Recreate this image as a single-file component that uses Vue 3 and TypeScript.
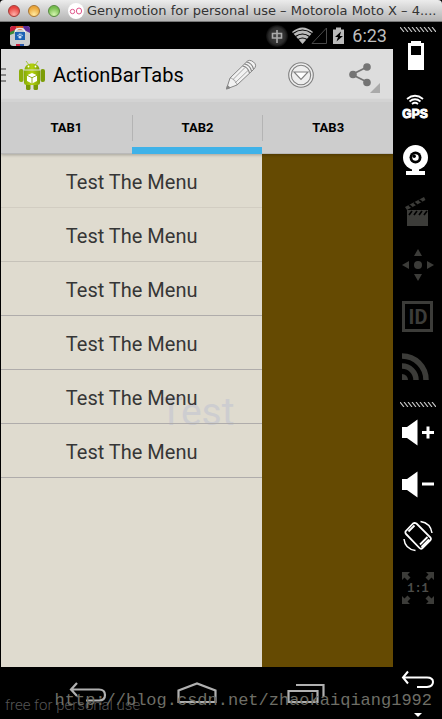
<script setup lang="ts">
import { ref } from 'vue'

const tabs: string[] = ['TAB1', 'TAB2', 'TAB3']
const activeTab = ref<number>(1)
const menuItems: string[] = Array.from({ length: 6 }, () => 'Test The Menu')

// Slanted strokes of the toolbar grips, one every four pixels
const gripPath: string = Array.from({ length: 9 }, (_, i) => `M${i * 4} 0l4 5`).join('')
</script>

<template>
  <div class="window">
    <header class="titlebar">
      <button class="light red" aria-label="Close"></button>
      <button class="light amber" aria-label="Minimize"></button>
      <button class="light green" aria-label="Zoom"></button>
      <svg class="logo" viewBox="0 0 16 16" aria-hidden="true">
        <circle cx="8" cy="8" r="8" fill="#fff" />
        <g fill="none" stroke="#e0568c" stroke-width="1">
          <circle cx="4.500" cy="8.500" r="2.200" />
          <ellipse cx="11" cy="8" rx="2.600" ry="3" />
        </g>
      </svg>
      <h1 class="window-title">Genymotion for personal use – Motorola Moto X – 4....</h1>
    </header>

    <div class="body">
      <main class="device">
        <div class="status">
          <svg class="app-badge" viewBox="0 0 20 20" aria-hidden="true">
            <rect width="20" height="20" rx="3" fill="#c9cccd" />
            <path d="M0 7V3Q0 0 3 0H7L5 5Z" fill="#c8203c" />
            <path d="M6 0H14L13 4H7Z" fill="#d6571f" />
            <path d="M13 0H17Q20 0 20 3V7L14 4Z" fill="#5b2a99" />
            <path d="M0 6L5 4V7L0 9Z" fill="#3a8a3a" />
            <path d="M6 18h4v2H6z" fill="#c8203c" /><path d="M10 18h4v2h-4z" fill="#2553a5" />
            <path d="M5 7Q5 2.500 10 2.500T15 7" fill="none" stroke="#eee" stroke-width="1.500" />
            <rect x="5" y="6" width="10" height="8" fill="#1c62b5" />
            <g fill="#cfe2f5"><circle cx="10" cy="11" r="1.600" /><circle cx="8" cy="9.500" r=".7" /><circle cx="9.300" cy="8.200" r=".7" /><circle cx="10.900" cy="8.200" r=".7" /><circle cx="12.100" cy="9.500" r=".7" /></g>
          </svg>
          <span class="spacer"></span>
          <svg class="status-icons" viewBox="0 0 80 24" aria-hidden="true">
            <defs>
              <radialGradient id="ime"><stop offset="0" stop-color="#484848" /><stop offset=".75" stop-color="#2c2c2c" /><stop offset="1" stop-color="#0a0a0a" /></radialGradient>
            </defs>
            <circle cx="11" cy="12" r="11" fill="url(#ime)" />
            <path d="M6.500 9.500h9v4.500h-9zM11 6v13" fill="none" stroke="#aaa" stroke-width="1.600" />
            <path d="M26 8Q36.500-1 47 8L36.500 20Z" fill="#bbb" />
            <path d="M27 9.500Q36.500 2.500 46 9.500M29.500 12.500Q36.500 7.500 43.500 12.500M32 15.500Q36.500 12.500 41 15.500" fill="none" stroke="#000" stroke-width="1.200" />
            <path d="M46 19.500L60.500 4V19.500Z" fill="none" stroke="#4a4a4a" />
            <path d="M67 5.500h3V3.500h5v2h3V20H67Z" fill="#bbb" />
            <path d="M75 7.500L69 13h3l-1.500 4.500L77 12h-3.200Z" fill="#000" />
          </svg>
          <time class="clock">6:23</time>
        </div>

        <div class="actionbar">
          <button class="drawer-toggle" aria-label="Open menu"><i></i><i></i><i></i></button>
          <svg class="droid" viewBox="0 0 26 30" aria-hidden="true">
            <defs>
              <linearGradient id="dr"><stop offset="0" stop-color="#87ac08" /><stop offset=".5" stop-color="#b4d20c" /><stop offset="1" stop-color="#7ea006" /></linearGradient>
            </defs>
            <path d="M7 1l3 4M19 1l-3 4" stroke="#a4c639" stroke-width="1" />
            <path d="M5.500 9.500C6 1.500 20 1.500 20.500 9.500Z" fill="url(#dr)" />
            <circle cx="9.500" cy="6.500" r=".9" fill="#fff" /><circle cx="16.500" cy="6.500" r=".9" fill="#fff" />
            <rect x="0" y="9" width="4.500" height="13" rx="2" fill="#8cad0b" />
            <rect x="21.500" y="9" width="4.500" height="13" rx="2" fill="#7c9d08" />
            <rect x="7" y="22" width="4.500" height="8" rx="1.500" fill="#789808" />
            <rect x="14.500" y="22" width="4.500" height="8" rx="1.500" fill="#789808" />
            <path d="M5 10.500H21V22.500Q21 25 18 25H8Q5 25 5 22.500Z" fill="url(#dr)" />
            <path d="M13 13l5 2.300v5.700l-5 2.500-5-2.500v-5.700Z" fill="#fff" />
            <path d="M8 15.300l5 2.400 5-2.400M13 17.700v5.800" fill="none" stroke="#8aa80a" stroke-width=".9" />
          </svg>
          <h2 class="app-title">ActionBarTabs</h2>
          <button class="action" aria-label="Edit">
            <svg viewBox="0 0 32 32" fill="#f2f2f2" stroke="#858585" stroke-width="1" stroke-linejoin="round" aria-hidden="true">
              <path d="M1.500 30L5 19L21 3.500Q24-.5 28.500 3T28 11L12 26Z" />
              <path d="M5 19Q7 18.500 8 20.500Q10.500 21 10.500 23.500Q12.500 24 12 26M8 20.500L20 8.500M10.500 23.500L23 11.500" fill="none" stroke-width=".7" />
              <path d="M17.500 7Q23 8 24.500 14M19.500 5Q25 6 26.500 12M21.500 3Q27 4 28.500 10" fill="none" stroke-width="1.200" />
              <path d="M1.500 30l1-3.500 2.500 2.200Z" fill="#858585" />
            </svg>
          </button>
          <button class="action" aria-label="More">
            <svg viewBox="0 0 32 32" fill="#eee" stroke="#808080" aria-hidden="true">
              <circle cx="16" cy="16" r="12.300" stroke-width="1.100" /><circle cx="16" cy="16" r="9.700" stroke-width="1.100" />
              <path d="M9 13h14L16 20.500Z" fill="#fff" stroke-width="1.100" />
            </svg>
          </button>
          <button class="action share" aria-label="Share">
            <svg viewBox="0 0 32 32" fill="#747474" aria-hidden="true">
              <path d="M22 8L7 15.500L22 23" fill="none" stroke="#747474" stroke-width="1.800" />
              <circle cx="22" cy="8" r="3.800" /><circle cx="8" cy="15.500" r="3.800" /><circle cx="22" cy="23.500" r="3.800" />
            </svg>
          </button>
        </div>

        <nav class="tabs" role="tablist">
          <button
            v-for="(tab, i) in tabs"
            :key="tab"
            class="tab"
            :class="{ active: i === activeTab }"
            role="tab"
            :aria-selected="i === activeTab"
            @click="activeTab = i"
          ><span>{{ tab }}</span></button>
        </nav>

        <section class="content">
          <div class="drawer"></div>
          <p class="page-label">Test</p>
          <ul class="menu">
            <li v-for="(item, i) in menuItems" :key="i"><button>{{ item }}</button></li>
          </ul>
        </section>

        <footer class="navbar">
          <button aria-label="Back">
            <svg viewBox="0 0 40 24" fill="none" stroke="#b0b0b0" stroke-width="2.200" aria-hidden="true">
              <path d="M9 2L3 8.500L9 15M3 8.500H31Q37 8.500 37 14T31 19.500H18" />
            </svg>
          </button>
          <button aria-label="Home">
            <svg viewBox="0 0 40 24" fill="none" stroke="#b0b0b0" stroke-width="2.200" aria-hidden="true">
              <path d="M1.500 21V9.500L20 2.500L38.500 9.500V21Z" />
            </svg>
          </button>
          <button aria-label="Recent apps">
            <svg viewBox="0 0 40 24" fill="none" stroke="#b0b0b0" stroke-width="2.200" aria-hidden="true">
              <path d="M2.500 10H31.500V21H2.500ZM10 4H37.500V16" />
            </svg>
          </button>
        </footer>
      </main>

      <aside class="toolbar">
        <div class="grip first"><svg viewBox="0 0 36 5"><path :d="gripPath" stroke="#c4c4c4" stroke-width="1.200" /></svg></div>
        <button aria-label="Battery">
          <svg viewBox="0 0 49 52" fill="#fff"><path fill-rule="evenodd" d="M18 12h10v2h3v27H15V14h3ZM18 17v9h10v-9Z" /></svg>
        </button>
        <button aria-label="GPS">
          <svg viewBox="0 0 49 52" fill="none" stroke="#fff" stroke-width="1.800">
            <path d="M14 18Q22 11.500 30 18M16.500 20.500Q22 16 27.500 20.500M19 23Q22 20.500 25 23" />
            <text x="22" y="37" class="gps">GPS</text>
          </svg>
        </button>
        <button aria-label="Camera">
          <svg viewBox="0 0 49 52" fill="#fff">
            <circle cx="22.500" cy="24.500" r="12.500" /><path d="M19 36h7v2h6v4H13v-4h6Z" />
            <circle cx="22.500" cy="24.500" r="6" fill="#000" /><circle cx="22.500" cy="24.500" r="3.200" /><circle cx="21.200" cy="23.200" r="1.700" fill="#000" />
          </svg>
        </button>
        <button aria-label="Screencast">
          <svg viewBox="0 0 49 52" fill="#3c3c39">
            <path d="M14 25h21v16H14ZM12 22l19-10 1.500 3L14 25Z" />
            <path d="M16 30l3-4M21 30l3-4M26 30l3-4M31 30l3-4M16 20l3 2.500M21 17.500l3 2.500M26 15l3 2" stroke="#000" stroke-width="1.700" />
          </svg>
        </button>
        <button aria-label="Remote control">
          <svg viewBox="0 0 49 52" fill="#3c3c39"><circle cx="25" cy="28" r="4" /><path d="M25 12l4 7h-8ZM25 44l4-7h-8ZM9 28l7-4v8ZM41 28l-7-4v8Z" /></svg>
        </button>
        <button aria-label="Identifiers">
          <svg viewBox="0 0 49 52"><rect x="10.500" y="13.500" width="28" height="28" fill="none" stroke="#3c3c39" stroke-width="3" /><text x="25" y="35" class="id">ID</text></svg>
        </button>
        <button aria-label="Network">
          <svg viewBox="0 0 49 52" fill="none" stroke="#3c3c39" stroke-width="5.500">
            <path d="M9 15A24 24 0 0 1 33 39M9 25A14 14 0 0 1 23 39" /><path d="M9 33A6 6 0 0 1 15 39H9Z" fill="#3c3c39" stroke="none" />
          </svg>
        </button>
        <div class="grip second"><svg viewBox="0 0 36 5"><path :d="gripPath" stroke="#c4c4c4" stroke-width="1.200" /></svg></div>
        <button aria-label="Volume up">
          <svg viewBox="0 0 49 52" fill="#fff"><path d="M9 20h5L24.500 12.500v26L14 31H9ZM33.500 19.500h3v4.500h4.500v3h-4.500v4.500h-3V27H29v-3h4.500Z" /></svg>
        </button>
        <button aria-label="Volume down">
          <svg viewBox="0 0 49 52" fill="#fff"><path d="M9 20h5L24.500 12.500v26L14 31H9ZM29 23.500h12v3H29Z" /></svg>
        </button>
        <button aria-label="Rotate">
          <svg viewBox="0 0 49 52" fill="none" stroke="#fff" stroke-width="1.800">
            <path d="M20 12.500L12.500 20.500Q12 22 13 23L26.500 37Q28 38.500 29.500 37L37.500 29Q38.500 28 37.500 26.500L23.500 12.500Q21.500 11.500 20 12.500ZM15.500 20.500L21.500 14.500M27 33.500L34.500 26M28.500 36L36 28.500" />
            <path d="M27.500 10.500Q37.500 12 39 22M11 28Q12 38 22.500 39.500" stroke-width="1.500" />
          </svg>
        </button>
        <button aria-label="Pixel perfect">
          <svg viewBox="0 0 49 52" fill="#3c3c39">
            <path d="M9 9h8l-2.500 2.500 3 3-3 3-3-3L9 17ZM41 9h-8l2.500 2.500-3 3 3 3 3-3L41 17ZM9 41h8l-2.500-2.500 3-3-3-3-3 3L9 33ZM41 41h-8l2.500-2.500-3-3 3-3 3 3L41 33Z" />
            <text x="25" y="29" class="ratio">1:1</text>
          </svg>
        </button>
        <span class="spacer"></span>
        <button class="back" aria-label="Back">
          <svg viewBox="0 0 49 52" fill="none" stroke="#fff" stroke-width="2">
            <path d="M15 16.500L10 22.500L15 28.500M10 22.500H34Q40 22.500 40 27T34 32H24" /><path d="M21 58l4 4 4-4Z" fill="#fff" stroke="none" />
          </svg>
        </button>
      </aside>

      <p class="license">free for personal use</p>
      <p class="watermark">http://blog.csdn.net/zhaokaiqiang1992</p>
    </div>
  </div>
</template>

<style>
body {
  margin: 0;
  background: #000;
}
</style>

<style scoped>
.window {
  display: flex;
  flex-direction: column;
  min-height: 100vh;
  background: #000;
  font-family: Roboto, "Liberation Sans", sans-serif;
}
button {
  margin: 0;
  padding: 0;
  border: 0;
  background: none;
  font: inherit;
  color: inherit;
}
h1, h2, p, ul { margin: 0; padding: 0; font-weight: 400; }
svg { display: block; }
.spacer { flex: 1; }

.titlebar {
  display: flex;
  align-items: center;
  box-sizing: border-box;
  height: 22px;
  padding: 0 8px;
  gap: 8px;
  border-radius: 4px 4px 0 0;
  border-bottom: 1px solid #777;
  background: linear-gradient(#ececec, #b4b4b4);
}
.light {
  flex: none;
  box-sizing: border-box;
  width: 12px;
  height: 12px;
  border: 1px solid;
  border-radius: 50%;
}
.red { border-color: #a33a36; background: radial-gradient(circle at 50% 85%, #ffb0a8, #e8443f 70%); }
.amber { border-color: #a87532; background: radial-gradient(circle at 50% 85%, #ffeaa0, #eba63a 70%); }
.green { border-color: #56893f; background: radial-gradient(circle at 50% 85%, #d5f5b0, #76bd4e 70%); }
.logo { flex: none; width: 16px; height: 16px; }
.window-title {
  margin-left: -5px;
  font: 13px/20px "DejaVu Sans", sans-serif;
  color: #333;
  white-space: nowrap;
}

.body { position: relative; display: flex; flex: 1; }
.device { display: flex; flex-direction: column; flex: 1; min-width: 0; padding-left: 1px; }

.status { display: flex; align-items: center; height: 27px; padding: 0 6px 0 9px; }
.app-badge { width: 20px; height: 20px; }
.status-icons { width: 80px; height: 24px; }
.clock { margin-left: 6px; font-size: 18px; line-height: 27px; color: #bebebe; }

.actionbar { display: flex; align-items: center; height: 51px; padding-right: 2px; background: #ddd; }
.drawer-toggle { display: grid; gap: 4px; width: 5px; }
.drawer-toggle i { height: 2px; background: #888; }
.droid { width: 26px; height: 30px; margin-left: 13px; }
.app-title { flex: 1; margin-left: 8px; padding-top: 2px; font-size: 20px; line-height: 49px; color: #000; }
.action { position: relative; display: grid; place-items: center; width: 60px; height: 51px; }
.action svg { width: 32px; height: 32px; }
.share::after {
  content: "";
  position: absolute;
  right: 11px;
  bottom: 7px;
  border: 5px solid #aaa;
  border-top-color: transparent;
  border-left-color: transparent;
}

.tabs {
  display: grid;
  grid-template-columns: repeat(3, 1fr);
  height: 54px;
  background: #cdcdcd;
  box-shadow: inset 0 2px #d3d3d3, inset 0 -1px #b9b9b9, 0 1px 3px #0004;
  z-index: 1;
}
.tab {
  display: flex;
  align-items: center;
  font-size: 13px;
  font-weight: 700;
  color: #000;
  border-bottom: 7px solid transparent;
  border-top: 9px solid transparent;
}
.tab span { flex: 1; line-height: 26px; }
.tab + .tab span { border-left: 1px solid #b4b4b4; }
.tab.active { border-bottom-color: #3fb2e8; }

.content { display: grid; grid-template-columns: 2fr 1fr; flex: 1; background: #654a02; }
.drawer { grid-area: 1 / 1; background: #dfdbcf; }
.page-label {
  grid-area: 1 / 1 / 2 / 3;
  place-self: center;
  padding-top: 3px;
  font-size: 39px;
  line-height: 44px;
  color: #cdcdd0;
}
.menu { grid-area: 1 / 1; list-style: none; }
.menu button {
  display: block;
  box-sizing: border-box;
  width: 100%;
  height: 54px;
  padding-top: 2px;
  border-bottom: 1px solid #afacab;
  font-size: 20px;
  color: #363636;
}
.menu li:first-child button { border-color: #d2cdc2; }
.menu li:nth-child(2) button { border-color: #c6c2b9; }

.navbar { display: flex; height: 52px; padding: 0 33px; }
.navbar button { display: grid; place-items: center; flex: 1; }
.navbar svg { width: 40px; height: 24px; }

.toolbar { display: flex; flex-direction: column; flex: none; width: 49px; background: #000; }
.toolbar button { height: 52px; }
.toolbar button svg { width: 49px; height: 52px; overflow: visible; }
.toolbar .back { margin-bottom: 12px; }
.grip { height: 5px; margin-left: 7px; }
.grip svg { width: 36px; height: 5px; }
.first { margin-top: 5px; margin-bottom: -3px; }
.second { margin-top: 9px; }
.gps { font: 700 12px "Liberation Sans", sans-serif; text-anchor: middle; fill: #fff; stroke-width: 1px; }
.id { font: 700 20px Roboto, sans-serif; text-anchor: middle; fill: #3c3c39; }
.ratio { font: 700 12px "Liberation Mono", monospace; text-anchor: middle; fill: #4c4c49; }

.license {
  position: absolute;
  left: 5px;
  bottom: 4px;
  font-size: 15px;
  font-weight: 300;
  line-height: 20px;
  color: #555;
  pointer-events: none;
}
.watermark {
  position: absolute;
  right: 10px;
  bottom: 8px;
  font: 17px/20px "Liberation Mono", monospace;
  color: #6e6e66;
  white-space: nowrap;
  pointer-events: none;
}
</style>
